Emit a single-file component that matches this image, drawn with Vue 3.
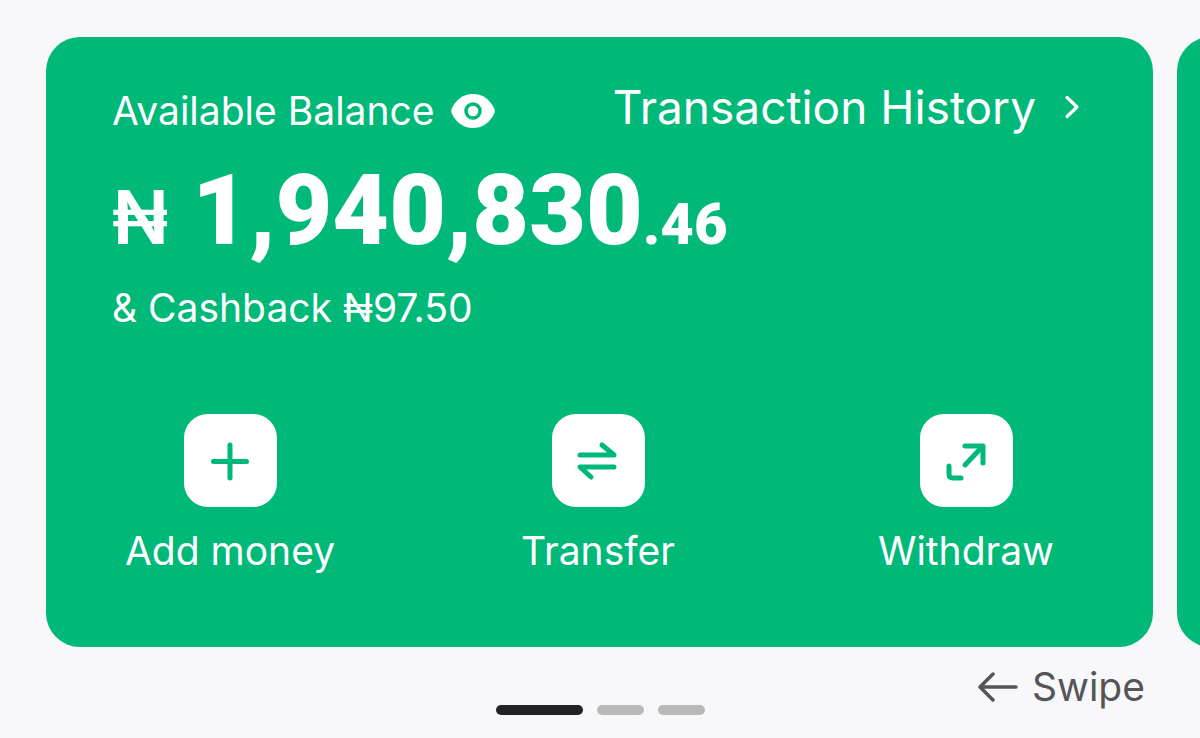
<script setup>
const actions = [
  { label: 'Add money', paths: ['M30 14v33M13.500 30.500h33'] },
  { label: 'Transfer', paths: ['M12 24h34L34 14', 'M46 36H12l11 10'] },
  { label: 'Withdraw', paths: ['M29 34L46 16', 'M29 15h18v17', 'M13 35v8q0 4 4 4h8'] },
]
</script>

<template>
  <main class="page">
    <div class="track">
      <section class="card">
        <header class="top">
          <div class="available">
            <span>Available Balance</span>
            <button class="plain eye" type="button" aria-label="Hide balance">
              <svg width="44" height="36" viewBox="0 0 44 36">
                <path d="M22 1C12 1 5 7 1 15Q-.5 18 1 21C5 29 12 35 22 35S39 29 43 21Q44.500 18 43 15C39 7 32 1 22 1Z" fill="#fff" />
                <circle cx="22" cy="18" r="7" fill="#fff" stroke="#00b978" stroke-width="3.500" />
              </svg>
            </button>
          </div>
          <a class="history" href="#history">
            <span>Transaction History</span>
            <svg width="16" height="24" viewBox="0 0 16 24">
              <path d="M3 2.500L13 12L3 21.500" fill="none" stroke="#fff" stroke-width="3.200" stroke-linecap="round" stroke-linejoin="round" />
            </svg>
          </a>
        </header>
        <p class="amount"><span class="naira">₦</span><span class="whole">1,940,830</span><span class="cents">.46</span></p>
        <p class="cashback">&amp; Cashback ₦97.50</p>
        <div class="actions">
          <button v-for="a in actions" :key="a.label" class="plain action" type="button">
            <span class="tile">
              <svg width="60" height="60" viewBox="0 0 60 60">
                <path v-for="p in a.paths" :key="p" :d="p" />
              </svg>
            </span>
            <span>{{ a.label }}</span>
          </button>
        </div>
      </section>
      <section class="card"></section>
    </div>
    <footer class="foot">
      <div class="dots"><i class="dot on"></i><i class="dot"></i><i class="dot"></i></div>
      <div class="swipe">
        <svg width="40" height="30" viewBox="0 0 40 30">
          <path d="M38 15H3M15 2L2 15L15 28" fill="none" stroke="#555558" stroke-width="3.500" stroke-linecap="round" stroke-linejoin="round" />
        </svg>
        <span>Swipe</span>
      </div>
    </footer>
  </main>
</template>

<style>
body {
  background: #f8f8fb;
}
</style>

<style scoped>
.page {
  box-sizing: border-box;
  min-height: 100vh;
  padding-top: 37px;
  overflow: hidden;
  background: #f8f8fb;
  font-family: Inter, Roboto, sans-serif;
  font-size: 39px;
  line-height: 48px;
  color: #fff;
}
.plain {
  padding: 0;
  border: 0;
  background: none;
  font: inherit;
  color: inherit;
  cursor: pointer;
}
.track {
  display: flex;
  gap: 24px;
  padding-left: 46px;
}
.card {
  box-sizing: border-box;
  flex: 0 0 calc(100% - 47px);
  padding-bottom: 72px;
  border-radius: 34px;
  background: #00b978;
}
.top {
  display: flex;
  justify-content: space-between;
  align-items: flex-start;
  padding: 46px 73px 0 66px;
}
.available {
  display: flex;
  align-items: center;
  gap: 16px;
  padding-top: 4px;
}
.eye,
.eye svg {
  display: block;
}
.history {
  display: flex;
  align-items: center;
  gap: 28px;
  font-size: 46px;
  color: inherit;
  text-decoration: none;
}
.amount {
  display: flex;
  align-items: baseline;
  margin: 20px 66px 0;
  line-height: 112px;
  font-weight: 900;
}
.naira {
  margin-right: 24px;
  font-size: 74px;
  font-weight: 600;
}
.whole {
  font-family: Roboto, sans-serif;
  font-size: 98px;
}
.cents {
  font-family: Roboto, sans-serif;
  font-size: 58px;
}
.cashback {
  margin: 4px 66px 0;
}
.actions {
  display: grid;
  grid-template-columns: repeat(3, 1fr);
  padding: 82px 3px 0 0;
}
.action {
  display: flex;
  flex-direction: column;
  align-items: center;
  gap: 20px;
}
.tile {
  display: grid;
  place-items: center;
  width: 93px;
  height: 93px;
  border-radius: 24px;
  background: #fff;
}
.tile path {
  fill: none;
  stroke: #00b978;
  stroke-width: 5;
  stroke-linecap: round;
  stroke-linejoin: round;
}
.foot {
  display: grid;
  grid-template-columns: 1fr auto 1fr;
  padding: 12px 55px 0;
}
.dots {
  grid-column: 2;
  display: flex;
  gap: 14px;
  padding-top: 46px;
}
.dot {
  width: 47px;
  height: 10px;
  border-radius: 5px;
  background: #b9b9ba;
}
.on {
  width: 87px;
  background: #222224;
}
.swipe {
  justify-self: end;
  display: flex;
  align-items: center;
  gap: 14px;
  color: #555558;
}
</style>
